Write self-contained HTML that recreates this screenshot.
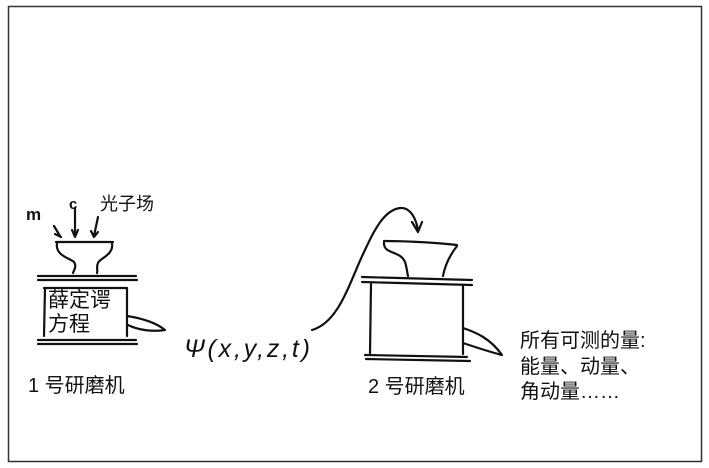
<!DOCTYPE html>
<html><head><meta charset="utf-8"><style>
body{margin:0;background:#fff;width:709px;height:468px;overflow:hidden}
svg{display:block}
text{font-family:"Liberation Sans","Noto Sans CJK SC",sans-serif;fill:#111}
</style></head><body>
<svg width="709" height="468" viewBox="0 0 709 468">
<rect x="8.5" y="6.5" width="693" height="455" fill="none" stroke="#333" stroke-width="1.5"/>
<g fill="none" stroke="#111" stroke-width="2.2" stroke-linecap="round" stroke-linejoin="round">
<path d="M56 242 L113 242"/>
<path d="M57 243 C55 256 70 258 74 262 C77 266 74 270 73 273"/>
<path d="M112 243 C114 255 100 258 98 263 C96 267 98 271 97 273"/>
<path d="M38 276 L136 276 M38 280 L137 280"/>
<path d="M45 288 L44 336 M44 288 L127 288 M127 288 L127 336"/>
<path d="M38 340 L136 340 M38 344 L137 344"/>
<path d="M127 316 C140 318 155 322 165 330 C152 332 138 330 128 325"/>
<path d="M54 226 L60 236 M61 237 L55 234"/>
<path d="M75 208 L75 236 M72 230 L75 237 L78 230"/>
<path d="M98 217 L94 236 M91 231 L94 237 L98 232"/>
<path d="M312 330 C340 322 350 280 365 250 C375 228 385 210 400 208 C410 207 416 218 418 230 M412 222 L418 232 L422 222"/>
<path d="M384 241 C410 241 440 243 457 245"/>
<path d="M384 242 C383 255 400 250 405 262 C407 268 407 272 408 276"/>
<path d="M457 246 C450 255 445 265 443 276"/>
<path d="M362 277 L472 280 M362 282 L472 285"/>
<path d="M371 284 L370 354 M463 285 L463 354"/>
<path d="M365 355 L467 357 M366 359 L470 361"/>
<path d="M463 328 C475 332 490 338 502 355 C490 352 475 347 463 343"/>
</g>
<text x="26" y="220" font-size="17" font-weight="bold">m</text>
<text x="69" y="209" font-size="15" font-weight="bold">c</text>
<text x="100" y="210" font-size="18">光子场</text>
<text x="48" y="307" font-size="21">薛定谔</text>
<text x="48" y="331" font-size="21">方程</text>
<text x="28" y="392" font-size="20">1 号研磨机</text>
<text x="184" y="357" font-size="25" font-style="italic" textLength="126" lengthAdjust="spacing">Ψ(x,y,z,t)</text>
<text x="368" y="393" font-size="20">2 号研磨机</text>
<text x="520" y="347" font-size="20">所有可测的量:</text>
<text x="520" y="373" font-size="20">能量、动量、</text>
<text x="520" y="398" font-size="20">角动量……</text>
</svg>
</body></html>
